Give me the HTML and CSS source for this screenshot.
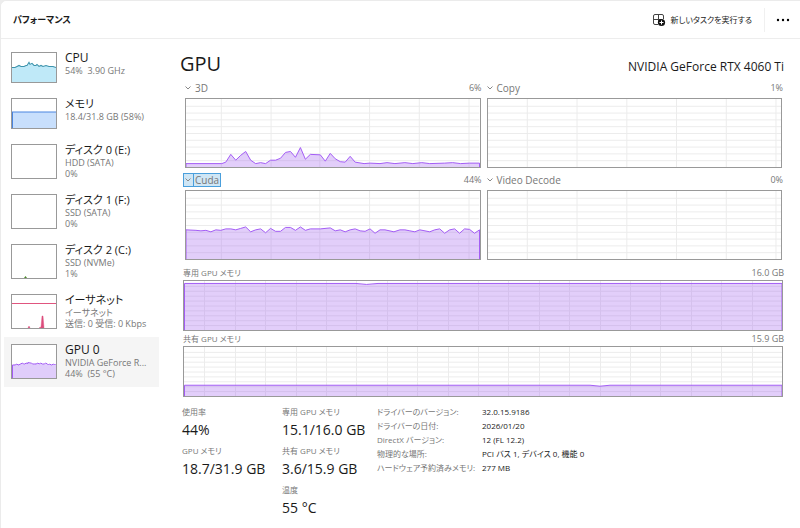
FILE: index.html
```html
<!DOCTYPE html>
<html lang="ja">
<head>
<meta charset="utf-8">
<title>パフォーマンス</title>
<link rel="stylesheet" href="styles.css">
</head>
<body>
<svg class="defs" width="0" height="0" aria-hidden="true">
  <defs>
    <symbol id="chevron" viewBox="0 0 8 8"><path d="M1.500 2.500 4 5l2.500-2.500" fill="none" stroke="currentColor"/></symbol>
    <symbol id="grid-a" viewBox="0 0 295 70" preserveAspectRatio="none">
      <path class="grid" d="M0 7.500H295M0 14.500H295M0 21.500H295M0 28.500H295M0 35.500H295M0 42.500H295M0 49.500H295M0 56.500H295M0 63.500H295M35.500 0V70M85.500 0V70M134.500 0V70M184.500 0V70M234.500 0V70M284.500 0V70"/>
    </symbol>
    <symbol id="grid-b" viewBox="0 0 295 70" preserveAspectRatio="none">
      <path class="grid" d="M0 7.500H295M0 14.500H295M0 21.500H295M0 28.500H295M0 35.500H295M0 42.500H295M0 49.500H295M0 56.500H295M0 63.500H295M39.500 0V70M89.500 0V70M139.500 0V70M189.500 0V70M239.500 0V70M289.500 0V70"/>
    </symbol>
    <symbol id="grid-c" viewBox="0 0 598 50" preserveAspectRatio="none">
      <path class="grid" d="M0 5.500H598M0 10.500H598M0 15.500H598M0 20.500H598M0 25.500H598M0 30.500H598M0 35.500H598M0 40.500H598M0 45.500H598M20.500 0V50M51.500 0V50M81.500 0V50M112.500 0V50M142.500 0V50M172.500 0V50M203.500 0V50M233.500 0V50M264.500 0V50M294.500 0V50M324.500 0V50M355.500 0V50M385.500 0V50M416.500 0V50M446.500 0V50M476.500 0V50M507.500 0V50M537.500 0V50M568.500 0V50"/>
    </symbol>
  </defs>
</svg>
<div class="window">
  <header class="topbar">
    <h1>パフォーマンス</h1>
    <button class="run" type="button">
      <svg width="14" height="14" viewBox="0 0 14 14" aria-hidden="true">
        <path d="M6 11.500H3A1.500 1.500 0 0 1 1.500 10V3A1.500 1.500 0 0 1 3 1.500h7A1.500 1.500 0 0 1 11.500 3v3M6.500 1.500v9M1.500 6.500h8" fill="none" stroke="#444"/>
        <circle cx="9.500" cy="9.500" r="3.600" fill="#111"/>
        <path d="M9.500 7.500v4M7.500 9.500h4" stroke="#fff"/>
      </svg>
      新しいタスクを実行する
    </button>
    <button class="more" type="button" aria-label="その他">
      <svg width="14" height="4" viewBox="0 0 14 4"><circle cx="2" cy="2" r="1.200"/><circle cx="7" cy="2" r="1.200"/><circle cx="12" cy="2" r="1.200"/></svg>
    </button>
  </header>
  <div class="body">
    <nav class="side">
      <button class="item short" type="button">
        <svg class="thumb" viewBox="0 0 44 28" preserveAspectRatio="none">
          <path d="M0 28V14h3l2-1 2-1 2 1 3 0 2-1 1 0 2-3 1 2 2-1 2 2 2 0 1-1 2 2 2-1 2 1 3-1 3 1 4 0 3 1V28z" fill="#bfe9f8"/>
          <path d="M0 14h3l2-1 2-1 2 1 3 0 2-1 1 0 2-3 1 2 2-1 2 2 2 0 1-1 2 2 2-1 2 1 3-1 3 1 4 0 3 1" fill="none" stroke="#3c93ac"/>
        </svg>
        <span class="info"><span class="name">CPU</span><span>54%&nbsp; 3.90 GHz</span></span>
      </button>
      <button class="item short" type="button">
        <svg class="thumb" viewBox="0 0 44 28" preserveAspectRatio="none">
          <path d="M0 12.500H44V28H0z" fill="#c8dffc"/><path d="M44 12.500H.5V28" fill="none" stroke="#4a85df"/>
        </svg>
        <span class="info"><span class="name kana">メモリ</span><span>18.4/31.8 GB (58%)</span></span>
      </button>
      <button class="item" type="button">
        <svg class="thumb" viewBox="0 0 44 33"></svg>
        <span class="info"><span class="name kana">ディスク 0 (E:)</span><span>HDD (SATA)</span><span>0%</span></span>
      </button>
      <button class="item" type="button">
        <svg class="thumb" viewBox="0 0 44 33"></svg>
        <span class="info"><span class="name kana">ディスク 1 (F:)</span><span>SSD (SATA)</span><span>0%</span></span>
      </button>
      <button class="item" type="button">
        <svg class="thumb" viewBox="0 0 44 33"><path d="M12 33l1.500-2 1.500 2z" fill="#4d8a2c"/></svg>
        <span class="info"><span class="name kana">ディスク 2 (C:)</span><span>SSD (NVMe)</span><span>1%</span></span>
      </button>
      <button class="item" type="button">
        <svg class="thumb" viewBox="0 0 44 33" preserveAspectRatio="none">
          <path d="M0 8.500H44" stroke="#e0557f"/>
          <path d="M16 33l1-2 1 2zM27 33l2-1 1-11 1 0 1 12z" fill="#dc4c7c" stroke="#dc4c7c" stroke-width=".4"/>
        </svg>
        <span class="info"><span class="name kana">イーサネット</span><span>イーサネット</span><span>送信: 0 受信: 0 Kbps</span></span>
      </button>
      <button class="item selected" type="button" aria-current="true">
        <svg class="thumb" viewBox="0 0 44 33" preserveAspectRatio="none">
          <path d="M0 20l5-1 3 0 2-1 2 1 2-1 2-1 2 1 3 1 4-1 5 1 4 0 5 1 5-1V33H0z" fill="#e0cdfb"/>
          <path d="M.5 33V20l3 0 1-1 2 1 2-1 2-1 1 1 1 0 2-1 1 1 1-2 1 1 2 0 1 1 2 0 2 0 1-1 2 1 1-1 2 1 2 0 1-1 2 1 1 1 1-1 2 1 2-1 1 1 1-1" fill="none" stroke="#a25bf5"/>
        </svg>
        <span class="info"><span class="name">GPU 0</span><span>NVIDIA GeForce R...</span><span>44%&nbsp; (55 °C)</span></span>
      </button>
    </nav>
    <main>
      <div class="title"><h2>GPU</h2><p>NVIDIA GeForce RTX 4060 Ti</p></div>
      <div class="charts">
        <section>
          <div class="label"><button type="button"><svg><use href="#chevron"/></svg><span>3D</span></button><span>6%</span></div>
          <svg class="chart" viewBox="0 0 295 70" preserveAspectRatio="none">
            <use href="#grid-a"/>
            <path class="area" d="M0 70V66.500H36L40 65 45 57 50 63 55 58 60 54 65 63 70 66.500 75 65.500 80 66.500 85 63H90L95 61 100 55 105 54 110 60 115 50 120 62 125 57 135 57.500 140 64 145 56 150 61.500 155 64.500 160 65 165 59 170 65 179 66.500 185 66 195 66.500 202 65.500 210 66.500 220 65.500 228 66.500 237 65.500 245 66.500 260 66 268 65.500 276 66.500 285 66 295 66V70"/>
          </svg>
        </section>
        <section>
          <div class="label"><button type="button"><svg><use href="#chevron"/></svg><span>Copy</span></button><span>1%</span></div>
          <svg class="chart" viewBox="0 0 295 70" preserveAspectRatio="none"><use href="#grid-b"/></svg>
        </section>
        <section>
          <div class="label"><button class="focused" type="button"><svg><use href="#chevron"/></svg><span>Cuda</span></button><span>44%</span></div>
          <svg class="chart" viewBox="0 0 295 70" preserveAspectRatio="none">
            <use href="#grid-a"/>
            <path class="area" d="M0 70V40L10 40.500 15 41 20 40.500 25 42 30 40 35 40.500 40 39 45 39 50 40 55 38.500 60 37 65 42 70 40 75 39 80 43 85 38.500 90 41.500 95 41.500 100 37.500 105 37.500 110 40.500 115 37 120 40.500 125 39 135 39 145 38 150 41 155 40 160 42 165 40 170 39 175 41 180 41.500 185 39 190 43.500 195 40 200 40 209 42 215 40 220 40 225 41 230 42 235 40 245 42 250 40 255 39 260 43.500 265 40 270 39 275 43.500 280 39 285 39.500 290 43.500 295 40V70"/>
          </svg>
        </section>
        <section>
          <div class="label"><button type="button"><svg><use href="#chevron"/></svg><span>Video Decode</span></button><span>0%</span></div>
          <svg class="chart" viewBox="0 0 295 70" preserveAspectRatio="none"><use href="#grid-b"/></svg>
        </section>
      </div>
      <section class="memory">
        <div class="label"><span>専用 GPU メモリ</span><span class="value">16.0 GB</span></div>
        <svg class="chart" viewBox="0 0 598 50" preserveAspectRatio="none">
          <use href="#grid-c"/>
          <path class="area" d="M.5 50V2.500H172Q182 4.500 194 2.500H598V50"/>
        </svg>
        <div class="label"><span>共有 GPU メモリ</span><span class="value">15.9 GB</span></div>
        <svg class="chart" viewBox="0 0 598 50" preserveAspectRatio="none">
          <use href="#grid-c"/>
          <path class="area" d="M.5 50V39H406Q416 41 426 39H598V50"/>
        </svg>
      </section>
      <div class="stats">
        <dl class="big">
          <dt>使用率</dt><dd>44%</dd>
          <dt>GPU メモリ</dt><dd>18.7/31.9 GB</dd>
        </dl>
        <dl class="big">
          <dt>専用 GPU メモリ</dt><dd>15.1/16.0 GB</dd>
          <dt>共有 GPU メモリ</dt><dd>3.6/15.9 GB</dd>
          <dt>温度</dt><dd>55 °C</dd>
        </dl>
        <dl class="details">
          <dt>ドライバーのバージョン:</dt><dd>32.0.15.9186</dd>
          <dt>ドライバーの日付:</dt><dd>2026/01/20</dd>
          <dt>DirectX バージョン:</dt><dd>12 (FL 12.2)</dd>
          <dt>物理的な場所:</dt><dd>PCI バス 1, デバイス 0, 機能 0</dd>
          <dt>ハードウェア予約済みメモリ:</dt><dd>277 MB</dd>
        </dl>
      </div>
    </main>
  </div>
</div>
</body>
</html>
```
FILE: styles.css
```css
* { box-sizing: border-box; margin: 0; padding: 0; }
body {
  background: #ededed;
  color: #1a1a1a;
  font: 8px/12px "Open Sans", "Noto Sans CJK JP", sans-serif;
  font-feature-settings: "palt";
}
button { border: 0; background: none; color: inherit; font: inherit; font-feature-settings: inherit; text-align: left; }
.defs { position: absolute; }
.window {
  min-height: 100vh;
  border: solid #ebebeb;
  border-width: 1px 0 0 1px;
  border-top-left-radius: 6px;
  background: #fff;
}
.topbar {
  display: flex;
  align-items: center;
  height: 38px;
  padding: 0 10px 0 12px;
  border-bottom: 1px solid #ededed;
}
.topbar h1 { flex: 1; font-size: 9px; font-weight: 600; }
.run { display: flex; align-items: center; gap: 5px; padding-right: 12px; line-height: 24px; border-right: 1px solid #f0f0f0; }
.more { display: flex; padding: 10px 0 10px 11px; }
.body { display: grid; grid-template-columns: 158px 1fr; }
.side { padding: 6px 0 0 3px; }
.item { display: flex; gap: 8px; width: 100%; height: 50px; padding: 7px; color: #777; font-size: 9px; }
.item.short { height: 46px; }
.item.selected { background: #f5f5f5; }
.thumb { flex: none; width: 46px; height: 35px; border: 1px solid #999; background: #fff; }
.short .thumb { height: 31px; }
.info { display: flex; flex-direction: column; line-height: 11px; white-space: nowrap; }
.name { padding-bottom: 2px; color: #1a1a1a; font-size: 12px; }
.kana { font-size: 11px; }
main { padding: 10px 17px 0 24px; }
.title { display: flex; justify-content: space-between; align-items: center; margin: 0 -1px 0 -3px; }
.title h2 { font-size: 20px; font-weight: 400; line-height: 30px; }
.title p { padding-top: 6px; font-size: 12px; line-height: 24px; }
.charts { display: grid; grid-template-columns: 1fr 1fr; gap: 3px 6px; padding: 0 1px 0 2px; }
.label { display: flex; justify-content: space-between; align-items: center; height: 15px; color: #777; }
.charts .label { height: 17px; margin-bottom: 2px; }
.label button { display: flex; align-items: center; height: 12px; margin-left: -1px; font-size: 10px; }
.label button svg { width: 8px; height: 8px; margin-right: 3px; color: #888; }
.label .focused { outline: 1px solid #4a9fdc; background: #cfe6f5; }
.focused span { border-left: 1px solid #4a9fdc; padding: 0 1px; }
.label .focused svg { margin-right: 1px; }
.charts .label > span, .label .value { margin-right: -1px; font-size: 9px; }
.chart { display: block; width: 100%; height: 70px; border: 1px solid #999; background: #fff; }
.grid { fill: none; stroke: #ececec; }
.area { fill: #a05cf0; fill-opacity: .3; stroke: #a25bf5; }
.memory { padding-top: 5px; }
.memory .chart { height: 51px; }
.stats { display: flex; padding-top: 8px; }
.big { width: 100px; margin-left: -1px; white-space: nowrap; }
.big + .big { margin-left: 0; }
.big dt, .details dt { color: #777; }
.big dt { line-height: 14px; }
.big dd { font-size: 14px; line-height: 22px; padding-bottom: 3px; }
.details { display: grid; grid-template-columns: 105px auto; align-content: start; margin-left: -5px; line-height: 14px; white-space: nowrap; }
```
